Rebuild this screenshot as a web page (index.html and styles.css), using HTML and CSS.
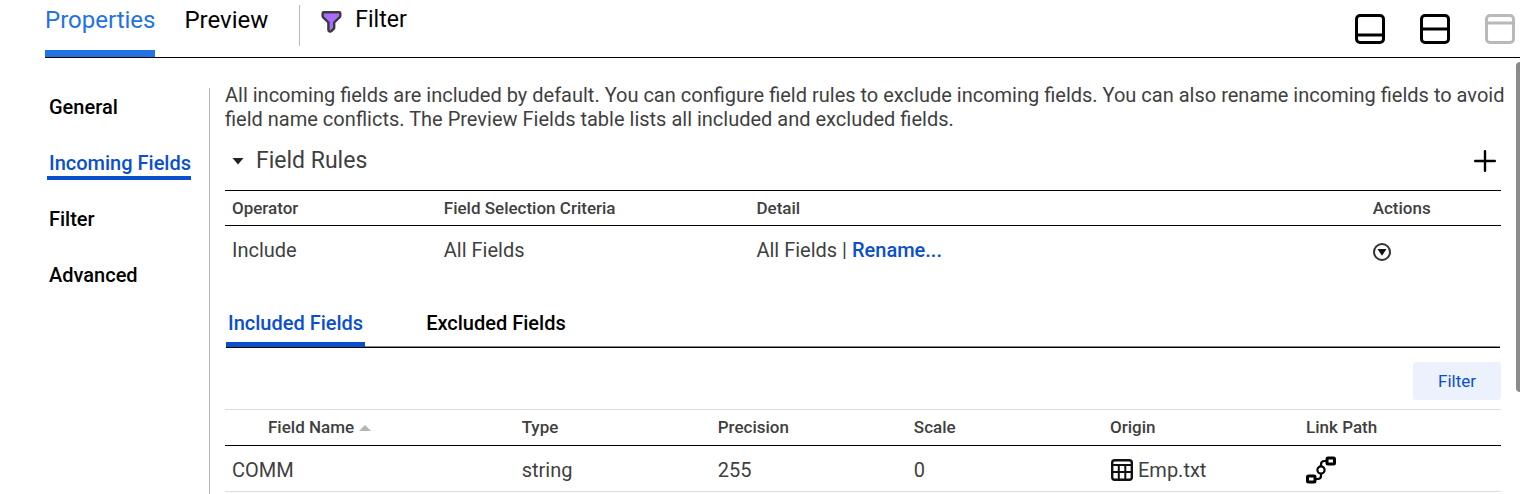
FILE: index.html
```html
<!DOCTYPE html>
<html lang="en">
<head>
<meta charset="utf-8">
<title>Filter properties</title>
<link rel="stylesheet" href="styles.css">
</head>
<body>
<div class="panel">
  <header class="topbar">
    <nav class="top-tabs">
      <button class="top-tab top-tab-active" type="button">Properties</button>
      <button class="top-tab" type="button">Preview</button>
    </nav>
    <div class="object">
      <svg class="object-icon" width="22" height="24" viewBox="0 0 22 24" aria-hidden="true"><path d="M2.8 2.3h16.4q1.1 0 1.1 1.2v2.2q0 1-.8 1.7l-5.3 5v5.3q0 .8-.6 1.3l-2.2 2.2q-.6.6-1.5.3l-.6-.2q-.9-.3-.9-1.4v-7.500l-5-4.800q-.8-.8-.8-1.800V3.500q0-1.200 1.200-1.200z" fill="#aa6bff" stroke="#3a3a3a" stroke-width="2.400"/></svg>
      <span>Filter</span>
    </div>
    <div class="layout-buttons">
      <button class="icon-button" type="button" aria-label="Minimize panel"><svg width="30" height="30" viewBox="0 0 30 30" fill="none" stroke="#000"><rect x="1.500" y="1.500" width="27" height="27" rx="3.500" stroke-width="3"/><path d="M2 21h26" stroke-width="3"/></svg></button>
      <button class="icon-button" type="button" aria-label="Split panel"><svg width="30" height="30" viewBox="0 0 30 30" fill="none" stroke="#000"><rect x="1.500" y="1.500" width="27" height="27" rx="3.500" stroke-width="3"/><path d="M2 15h26" stroke-width="3"/></svg></button>
      <button class="icon-button" type="button" aria-label="Maximize panel" disabled><svg width="30" height="30" viewBox="0 0 30 30" fill="none" stroke="#b9b9b9"><rect x="1.500" y="1.500" width="27" height="27" rx="3.500" stroke-width="3"/><path d="M2 9h26" stroke-width="3"/></svg></button>
    </div>
  </header>
  <div class="content">
    <nav class="sidebar">
      <a class="side-link" href="#general">General</a>
      <a class="side-link side-link-active" href="#incoming">Incoming Fields</a>
      <a class="side-link" href="#filter">Filter</a>
      <a class="side-link" href="#advanced">Advanced</a>
    </nav>
    <main class="main">
      <p class="intro">All incoming fields are included by default. You can configure field rules to exclude incoming fields. You can also rename incoming fields to avoid field name conflicts. The Preview Fields table lists all included and excluded fields.</p>
      <div class="section-head">
        <button class="section-toggle" type="button" aria-expanded="true">
          <svg width="12" height="8" viewBox="0 0 12 8" aria-hidden="true"><path d="M.5 1h11L6 7.500z" fill="#222"/></svg>
          <span>Field Rules</span>
        </button>
        <button class="icon-button" type="button" aria-label="Add rule"><svg width="22" height="22" viewBox="0 0 22 22" stroke="#000" stroke-width="2.400" stroke-linecap="round"><path d="M11 1.200v19.600M1.200 11h19.600"/></svg></button>
      </div>
      <table class="table rules">
        <colgroup><col class="col-operator"><col class="col-criteria"><col class="col-detail"><col></colgroup>
        <thead><tr><th>Operator</th><th>Field Selection Criteria</th><th>Detail</th><th>Actions</th></tr></thead>
        <tbody><tr>
          <td>Include</td><td>All Fields</td>
          <td>All Fields | <a class="rename" href="#rename">Rename...</a></td>
          <td><button class="icon-button row-actions" type="button" aria-label="Row actions"><svg width="18" height="18" viewBox="0 0 18 18"><circle cx="9" cy="9" r="8" fill="#fff" stroke="#333" stroke-width="2"/><path d="M4.500 6h9L9 12.800z" fill="#111"/></svg></button></td>
        </tr></tbody>
      </table>
      <div class="field-tabs">
        <button class="field-tab field-tab-active" type="button">Included Fields</button>
        <button class="field-tab" type="button">Excluded Fields</button>
      </div>
      <div class="table-tools"><button class="filter-button" type="button">Filter</button></div>
      <table class="table fields">
        <colgroup><col class="col-name"><col class="col-even"><col class="col-even"><col class="col-even"><col class="col-even"><col></colgroup>
        <thead><tr>
          <th class="name-head">Field Name <svg width="12" height="8" viewBox="0 0 12 8" aria-hidden="true"><path d="M0 7h12L6 1z" fill="#b5b5b5"/></svg></th>
          <th>Type</th><th>Precision</th><th>Scale</th><th>Origin</th><th>Link Path</th>
        </tr></thead>
        <tbody><tr>
          <td>COMM</td><td>string</td><td>255</td><td>0</td>
          <td><span class="origin"><svg width="22" height="22" viewBox="0 0 22 22" fill="none" stroke="#111" aria-hidden="true"><rect x="1.200" y="1.200" width="19.600" height="19.600" rx="2.500" stroke-width="2.400"/><path d="M1 6h20M1 13h20M7.800 6v15M14.300 6v15" stroke-width="2"/></svg>Emp.txt</span></td>
          <td><button class="icon-button" type="button" aria-label="Show link path"><svg width="30" height="28" viewBox="0 0 30 28" fill="none" stroke="#000"><rect x="21" y="2" width="7.500" height="6" rx="1" stroke-width="3"/><rect x="1.500" y="20" width="7.500" height="6" rx="1" stroke-width="3"/><circle cx="15" cy="14" r="3.600" stroke-width="2.200"/><path d="M15 10.500V8.500Q15 5 18.500 5H20M15 17.500V20q0 3-3.500 3H10" stroke-width="2.200"/></svg></button></td>
        </tr></tbody>
      </table>
    </main>
    <div class="scroll-thumb" aria-hidden="true"></div>
  </div>
</div>
</body>
</html>
```
FILE: styles.css
```css
* { box-sizing: border-box; }

body {
  margin: 0;
  background: #fff;
  color: #3f3f3f;
  font: 400 20px/24px Roboto, "Liberation Sans", sans-serif;
}

button {
  margin: 0;
  padding: 0;
  border: 0;
  background: none;
  color: inherit;
  font: inherit;
}

svg { display: block; flex: none; }
a { text-decoration: none; }

.panel {
  display: flex;
  flex-direction: column;
  min-height: 100vh;
  padding-left: 45px;
}

.topbar {
  display: flex;
  align-items: flex-start;
  height: 58px;
  border-bottom: 1px solid #000;
  color: #000;
  font-size: 24px;
}

.top-tabs { display: flex; gap: 29px; height: 57px; }

.top-tab {
  display: flex;
  padding-top: 8px;
}

.top-tab-active {
  border-bottom: 7px solid #2272e3;
  color: #2272e3;
}

.object {
  display: flex;
  align-items: center;
  gap: 13px;
  height: 41px;
  margin: 5px 0 0 31px;
  padding: 0 0 12px 20px;
  border-left: 1px solid #b8b8b8;
  font-size: 23px;
}

.object-icon { margin-top: 4px; }

.layout-buttons {
  display: flex;
  gap: 35px;
  margin-left: auto;
  padding: 14px 5px 0 0;
}

.icon-button { display: block; }

.content { display: flex; flex: 1; }

.sidebar {
  display: flex;
  flex-direction: column;
  align-items: flex-start;
  gap: 25px;
  flex: none;
  width: 165px;
  margin-top: 30px;
  padding: 5px 0 0 2px;
  border-right: 1px solid #b8b8b8;
}

.side-link {
  height: 31px;
  padding: 2px 0 0 2px;
  color: #000;
  font-weight: 500;
}

.side-link-active {
  border-bottom: 4px solid #0a4fcb;
  color: #0a4fcb;
}

.main {
  flex: 1;
  min-width: 0;
  padding: 25px 15px 0 15px;
}

.intro { margin: 0 -10px 0 0; }

.section-head {
  display: flex;
  align-items: center;
  justify-content: space-between;
  height: 59px;
  padding-right: 5px;
}

.section-toggle {
  display: flex;
  align-items: center;
  gap: 12px;
  padding-left: 7px;
  font-size: 23px;
}

.table {
  width: 100%;
  border-collapse: separate;
  border-spacing: 0;
  table-layout: fixed;
}

.table th, .table td {
  padding: 0 0 0 7px;
  text-align: left;
  white-space: nowrap;
}

.table th {
  height: 36px;
  border-top: 1px solid #dcdcdc;
  border-bottom: 1px solid #000;
  font-size: 17px;
  font-weight: 500;
}

.rules th { border-top-color: #000; }
.rules td { height: 50px; padding-bottom: 2px; }
.fields th { height: 37px; padding-bottom: 2px; }
.fields td { height: 46px; border-bottom: 1px solid #dcdcdc; padding-top: 2px; }

.row-actions { padding-top: 4px; }

.col-operator { width: 16.600%; }
.col-criteria { width: 24.500%; }
.col-detail { width: 48.300%; }
.col-name { width: 22.700%; }
.col-even { width: 15.370%; }

.rename {
  color: #0a4fcb;
  font-weight: 500;
}

.field-tabs {
  display: flex;
  gap: 59px;
  height: 47px;
  margin: 25px 1px 0;
  border-bottom: 1px solid #000;
  box-shadow: inset 0 -1px #8a8a8a;
}

.field-tab {
  display: flex;
  padding: 10px 2px 0;
  color: #000;
  font-weight: 500;
}

.field-tab-active {
  border-bottom: 5px solid #0a4fcb;
  color: #0a4fcb;
}

.table-tools {
  display: flex;
  justify-content: flex-end;
  padding: 14px 0 9px;
}

.filter-button {
  width: 88px;
  height: 38px;
  border-radius: 3px;
  background: #ebf2fe;
  color: #0a4fcb;
  font-size: 17px;
}

.table .name-head { padding-left: 43px; }
.name-head svg { display: inline-block; margin-left: 1px; vertical-align: 1px; }

.origin {
  display: flex;
  align-items: center;
  gap: 5px;
  padding-left: 1px;
}

.scroll-thumb {
  flex: none;
  width: 4px;
  height: 330px;
  margin-top: 4px;
  border-radius: 4px 0 0 4px;
  background: #8b8b8b;
}
```
